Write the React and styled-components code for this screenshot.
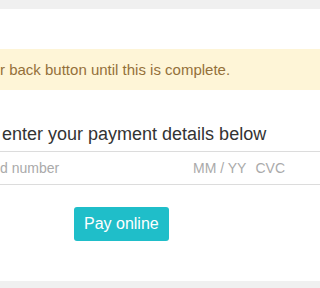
import React from "react";
import styled, { createGlobalStyle } from "styled-components";

const GlobalStyle = createGlobalStyle`
    html, body {
        margin: 0;
        padding: 0;
        background: #f0f0f0;
        font-family: "Liberation Sans", Arial, sans-serif;
    }
`;

const Page = styled.div`
    padding-top: 9px;
    overflow: hidden;
`;

const Panel = styled.div`
    background: #fff;
    height: 272px;
    padding-top: 40px;
    box-sizing: border-box;
`;

const Alert = styled.div`
    height: 41px;
    display: flex;
    align-items: center;
    background: #fef5d7;
    color: #94703a;
    font-size: 15px;
    white-space: nowrap;
`;

const Heading = styled.h3`
    margin: 34px 0 0 2px;
    font-size: 18px;
    line-height: 20px;
    font-weight: normal;
    color: #333;
    white-space: nowrap;
`;

const CardField = styled.div`
    margin-top: 7px;
    height: 34px;
    box-sizing: border-box;
    border-top: 1px solid #dcdcdc;
    border-bottom: 1px solid #dcdcdc;
    display: flex;
    align-items: center;
    font-size: 14px;
    color: #aaa;
`;

const CardInner = styled.div`
    width: 285px;
    display: flex;
    align-items: center;
    flex: none;
`;

const Placeholder = styled.span`
    flex: ${(p) => (p.grow ? 1 : "none")};
    margin-left: ${(p) => p.gap || 0}px;
    white-space: nowrap;
`;

const Actions = styled.div`
    padding: 22px 0 0 74px;
`;

const PayButton = styled.button`
    height: 34px;
    padding: 0 10px;
    border: none;
    border-radius: 3px;
    background: #1fbec9;
    color: #fff;
    font-family: "Liberation Sans", Arial, sans-serif;
    font-size: 16px;
    cursor: pointer;
`;

export default function App() {
    return (
        <Page>
            <GlobalStyle />
            <Panel>
                <Alert>r back button until this is complete.</Alert>
                <Heading>enter your payment details below</Heading>
                <CardField>
                    <CardInner>
                        <Placeholder grow>d number</Placeholder>
                        <Placeholder>MM / YY</Placeholder>
                        <Placeholder gap={9}>CVC</Placeholder>
                    </CardInner>
                </CardField>
                <Actions>
                    <PayButton>Pay online</PayButton>
                </Actions>
            </Panel>
        </Page>
    );
}
